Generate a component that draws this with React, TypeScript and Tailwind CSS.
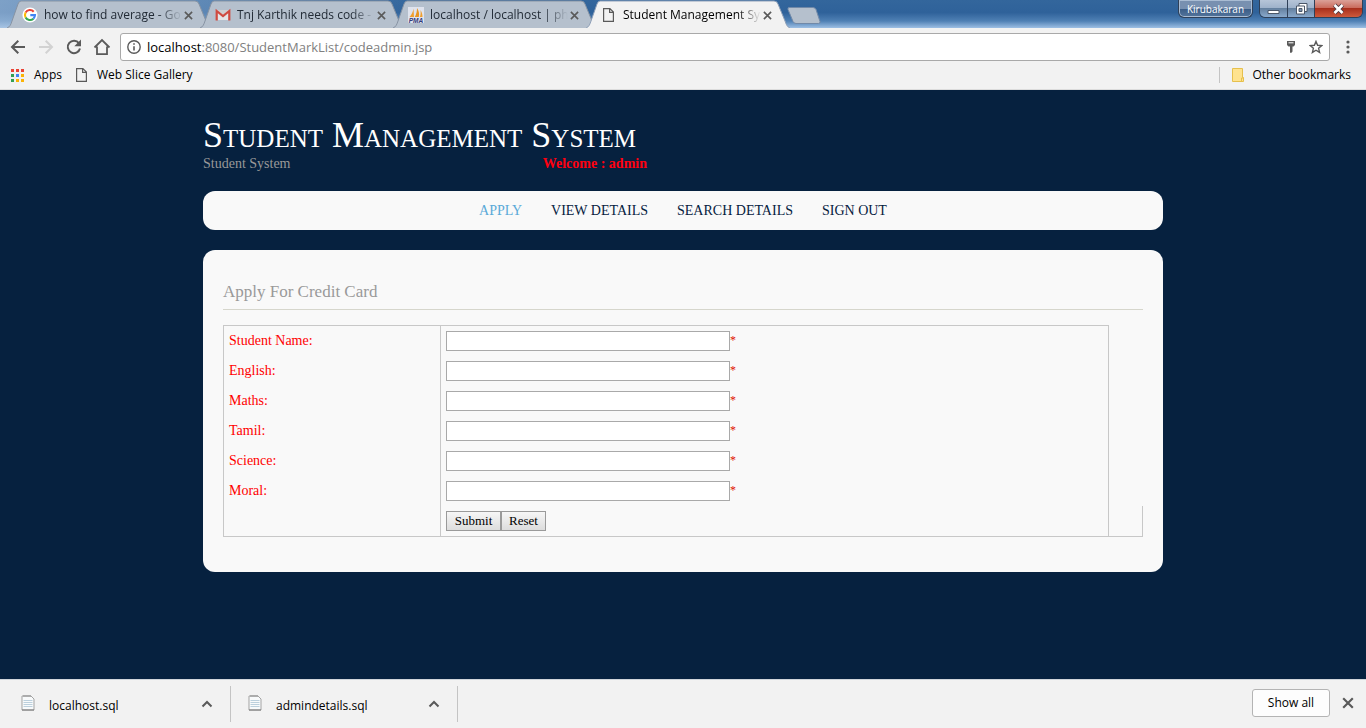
import type { ReactNode } from "react";

function CloseGlyph({ size = 10, width = 2 }: { size?: number; width?: number }) {
  return (
    <svg width={size} height={size} viewBox="0 0 10 10" fill="none" stroke="#5a5a5a" strokeWidth={width} aria-hidden="true">
      <path d="M1 1l8 8M9 1L1 9" />
    </svg>
  );
}

function GoogleIcon() {
  return (
    <svg className="shrink-0" width="16" height="16" viewBox="0 0 16 16" aria-hidden="true">
      <circle cx="8" cy="8" r="7.6" fill="#fff" />
      <g fill="none" strokeWidth="2.1">
        <path d="M11.7 4.7A5 5 0 0 0 3.6 5.6" stroke="#ea4335" />
        <path d="M3.6 5.6a5 5 0 0 0 0 4.8" stroke="#fbbc05" />
        <path d="M3.6 10.4a5 5 0 0 0 7.8 1.3" stroke="#34a853" />
        <path d="M11.4 11.7A5 5 0 0 0 13 8.1H8.3" stroke="#4285f4" />
      </g>
    </svg>
  );
}

function GmailIcon() {
  return (
    <svg className="shrink-0" width="16" height="16" viewBox="0 0 16 16" aria-hidden="true">
      <path d="M2 3h12v10H2z" fill="#e4e4e6" />
      <path d="M2 3l6 5 6-5z" fill="#cfcfd2" />
      <path d="M1.7 13.5V4L8 9l6.3-5v9.5" fill="none" stroke="#cf4a40" strokeWidth="2.2" />
    </svg>
  );
}

function PmaIcon() {
  return (
    <svg className="shrink-0" width="16" height="16" viewBox="0 0 16 16" aria-hidden="true">
      <path d="M0 0h16v16H0z" fill="#dfe3ee" />
      <path d="M5.5 1.5L6 10H1.5C3.5 8 5 5 5.500 1.500z" fill="#f0a030" />
      <path d="M9 1c2 3 2.500 6 1.800 9H6.800C8.500 7 9 4 9 1z" fill="#e99520" />
      <path d="M12.500 3c1.500 2.500 2 4.500 2 7h-2.700c.9-2 1-4.500.7-7z" fill="#f0a030" />
      <text x="8" y="15.500" textAnchor="middle" fontFamily="Liberation Sans, sans-serif" fontSize="6.500" fontWeight="bold" fontStyle="italic" fill="#333a78">
        PMA
      </text>
    </svg>
  );
}

function PageIcon() {
  return (
    <svg className="shrink-0" width="16" height="16" viewBox="0 0 16 16" fill="none" stroke="#5a5a5a" strokeWidth="1.2" aria-hidden="true">
      <path d="M2.600 1.600h6.300l3.500 3.500v9.300H2.600zM8.600 1.600v3.800h3.800" />
    </svg>
  );
}

function Tab({ icon, title, active }: { icon: ReactNode; title: string; active?: boolean }) {
  return (
    <div className={`relative -mr-[11px] h-7 w-[204px] shrink-0 ${active ? "z-10" : ""}`}>
      <svg className="absolute inset-0 h-full w-full" viewBox="0 0 204 28" preserveAspectRatio="none" aria-hidden="true">
        <path
          d="M0 28C3 27 4 24 5 21L11 4Q12 1 14 1H188Q191 1 192 4L199 21C200 24 201 27 204 28"
          fill={active ? "#f2f2f2" : "#b5c0cd"}
          stroke={active ? "#8fa0b8" : "#8793a3"}
          strokeWidth="1"
        />
      </svg>
      <div className="relative flex h-full items-center pt-0.5 pl-[15px] pr-[18px]">
        {icon}
        <a
          href="#"
          className={`ml-1.5 min-w-0 flex-1 whitespace-nowrap text-[12px] leading-4 [mask-image:linear-gradient(to_right,black_114px,transparent_138px)] ${active ? "text-black" : "text-[#222b36]"}`}
        >
          {title}
        </a>
        <button type="button" aria-label={`Close ${title}`}>
          <CloseGlyph size={9} width={1.8} />
        </button>
      </div>
    </div>
  );
}

function TitleBar() {
  return (
    <div className="flex h-7 bg-[linear-gradient(to_right,rgba(175,200,228,0.6)_0,rgba(175,200,228,0.35)_210px,transparent_420px),linear-gradient(to_bottom,#33669c_0,#2f629a_45%,#4f80b4_75%,#9dbfe4_100%)] pl-[7px]">
      <Tab icon={<GoogleIcon />} title="how to find average - Go" />
      <Tab icon={<GmailIcon />} title="Tnj Karthik needs code -" />
      <Tab icon={<PmaIcon />} title="localhost / localhost | ph" />
      <Tab icon={<PageIcon />} title="Student Management Sy" active />
      <button type="button" aria-label="New tab" className="ml-2 mt-[7px] h-[17px]">
        <svg width="34" height="17" viewBox="0 0 34 17" aria-hidden="true">
          <path d="M2 .5h24q2 0 3 2l4 12q.5 2-1.500 2H9q-2 0-3-2L1 2.500Q.5.5 2 .5z" fill="#b5c0cd" stroke="#7189a8" />
        </svg>
      </button>
      <div className="ml-auto flex h-[18px] items-start gap-1.5 pr-[3px]">
        <button
          type="button"
          className="h-[18px] w-[75px] rounded-b-md border border-t-0 border-[#2f4058] bg-[linear-gradient(to_bottom,#7890b0_0,#7890b0_50%,#3a5c86_52%,#54759c_100%)] text-[10px] leading-4 text-white shadow-[inset_0_0_0_1px_#a9bcd3]"
        >
          Kirubakaran
        </button>
        <div className="flex h-[18px] overflow-hidden rounded-b-md border border-t-0 border-[#2f4058]">
          <button type="button" aria-label="Minimize" className="flex w-[28px] items-center justify-center border-r border-[#2f4058] bg-[linear-gradient(to_bottom,#b6c5d8_0,#9db1ca_48%,#64809f_50%,#8aa9cc_100%)]">
            <svg width="13" height="12" viewBox="0 0 13 12" aria-hidden="true">
              <path d="M1 7.500h11v3H1z" fill="#fff" stroke="#4b5768" />
            </svg>
          </button>
          <button type="button" aria-label="Restore" className="flex w-[27px] items-center justify-center border-r border-[#2f4058] bg-[linear-gradient(to_bottom,#b6c5d8_0,#9db1ca_48%,#64809f_50%,#8aa9cc_100%)]">
            <svg width="13" height="13" viewBox="0 0 13 13" fill="#fff" stroke="#4b5768" aria-hidden="true">
              <path d="M4 1.500h8v8H4z" />
              <path d="M1.500 4h8v8h-8z" />
              <path d="M4 6.500h3v3H4z" fill="#7f95b0" />
            </svg>
          </button>
          <button type="button" aria-label="Close window" className="flex w-[47px] items-center justify-center bg-[linear-gradient(to_bottom,#dba198_0,#c9695a_48%,#a8301d_50%,#cf5a3b_100%)]">
            <svg width="13" height="12" viewBox="0 0 13 12" fill="none" aria-hidden="true">
              <path d="M2.500 2l8 8M10.500 2l-8 8" stroke="#4a3840" strokeWidth="4.400" />
              <path d="M2.500 2l8 8M10.500 2l-8 8" stroke="#fff" strokeWidth="2.600" />
            </svg>
          </button>
        </div>
      </div>
    </div>
  );
}

function Toolbar() {
  return (
    <div className="flex h-[38px] items-center bg-[#f2f2f2] pl-[9px] pr-2.5">
      <div className="flex items-center gap-2.5">
        <button type="button" aria-label="Back">
          <svg width="18" height="18" viewBox="0 0 18 18" fill="none" stroke="#5a5a5a" strokeWidth="2" aria-hidden="true">
            <path d="M16 9H3M9.300 2.700L3 9l6.300 6.300" />
          </svg>
        </button>
        <button type="button" aria-label="Forward">
          <svg width="18" height="18" viewBox="0 0 18 18" fill="none" stroke="#d2d2d2" strokeWidth="2" aria-hidden="true">
            <path d="M2 9h13M8.700 2.700L15 9l-6.300 6.300" />
          </svg>
        </button>
        <button type="button" aria-label="Reload">
          <svg width="18" height="18" viewBox="0 0 18 18" aria-hidden="true">
            <path d="M14 5.300A6.200 6.200 0 1 0 15 10.500" fill="none" stroke="#5a5a5a" strokeWidth="2" />
            <path d="M16 1.500v6.700H9.300z" fill="#5a5a5a" />
          </svg>
        </button>
        <button type="button" aria-label="Home">
          <svg width="18" height="18" viewBox="0 0 18 18" fill="none" stroke="#5a5a5a" strokeWidth="1.800" aria-hidden="true">
            <path d="M1.500 9.500L9 2l7.500 7.500M4 8.500v7.600h10V8.500" />
          </svg>
        </button>
      </div>
      <div className="ml-[9px] flex h-7 min-w-0 flex-1 items-center rounded-[3px] border border-[#a9a9a9] bg-white pl-1.5 pr-1.5">
        <svg width="14" height="14" viewBox="0 0 14 14" fill="none" stroke="#5a5a5a" strokeWidth="1.400" aria-hidden="true">
          <circle cx="7" cy="7" r="6.200" />
          <path d="M7 6.200v4.300M7 3.300v1.500" strokeWidth="1.600" />
        </svg>
        <div className="ml-1.5 flex-1 truncate text-[13px] leading-5 text-[#808080]">
          <span className="text-black">localhost</span>:8080/StudentMarkList/codeadmin.jsp
        </div>
        <button type="button" aria-label="Saved passwords" className="mr-3">
          <svg width="12" height="14" viewBox="0 0 12 14" aria-hidden="true">
            <path d="M2 1h8v4L8.500 6.500H7.500V11.500L6.500 12.800H5V6.500H3.500L2 5z" fill="#5a5a5a" />
            <path d="M3.500 2.800h5" stroke="#fff" />
          </svg>
        </button>
        <button type="button" aria-label="Bookmark this page">
          <svg width="14" height="14" viewBox="0 0 14 14" fill="none" stroke="#5a5a5a" strokeWidth="1.400" aria-hidden="true">
            <path d="M7 1.400l1.600 3.900 4.200.3-3.200 2.700 1 4.100L7 10.200l-3.600 2.200 1-4.100L1.200 5.600l4.200-.3z" />
          </svg>
        </button>
      </div>
      <button type="button" aria-label="Menu" className="ml-4 mr-1.5">
        <svg width="4" height="14" viewBox="0 0 4 14" fill="#5a5a5a" aria-hidden="true">
          <circle cx="2" cy="2" r="1.600" />
          <circle cx="2" cy="7" r="1.600" />
          <circle cx="2" cy="12" r="1.600" />
        </svg>
      </button>
    </div>
  );
}

const appDots = ["#ea4335", "#ea4335", "#ea4335", "#34a053", "#4285f4", "#fbb305", "#34a053", "#fbb305", "#fbb305"];

function BookmarksBar() {
  return (
    <div className="flex h-6 items-start border-b border-[#dcdcdc] bg-[#f2f2f2] pt-px pr-[15px] pl-[11px] text-[12px] leading-4 text-black">
      <a href="#" className="flex items-center gap-2.5">
        <svg width="13" height="13" viewBox="0 0 13 13" aria-hidden="true">
          {appDots.map((color, i) => (
            <rect key={i} x={(i % 3) * 5} y={Math.floor(i / 3) * 5} width="3" height="3" fill={color} />
          ))}
        </svg>
        Apps
      </a>
      <a href="#" className="ml-3 flex items-center gap-[7px]">
        <PageIcon />
        Web Slice Gallery
      </a>
      <a href="#" className="ml-auto flex items-center gap-2 border-l border-[#c4c4c4] pl-3">
        <svg width="12" height="14" viewBox="0 0 12 14" fill="#ffe38f" stroke="#e6c04d" aria-hidden="true">
          <path d="M.5.5h10v9h1v4H.5z" />
          <path d="M9.500 13.500v-3.500h2" fill="none" />
        </svg>
        Other bookmarks
      </a>
    </div>
  );
}

const navLinks = ["APPLY", "VIEW DETAILS", "SEARCH DETAILS", "SIGN OUT"];
const fields = ["Student Name", "English", "Maths", "Tamil", "Science", "Moral"];

function MarkForm() {
  return (
    <form onSubmit={(event) => event.preventDefault()}>
      <table className="w-full table-fixed border-separate border-spacing-0 text-[14px] leading-5">
        <colgroup>
          <col className="w-[218px]" />
          <col />
          <col className="w-[34px]" />
        </colgroup>
        <tbody>
          {fields.map((field, i) => (
            <tr key={field}>
              <td className={`border-x border-[#c8c8c8] p-[5px] align-top text-[#ff0000] ${i === 0 ? "border-t" : ""}`}>
                <label htmlFor={field}>{field}:</label>
              </td>
              <td className={`border-r border-[#c8c8c8] p-[5px] ${i === 0 ? "border-t" : ""}`}>
                <div className="flex h-5">
                  <input id={field} type="text" className="h-5 w-[284px] border border-[#a9a9a9] bg-white px-0.5 text-black" />
                  <span className="text-[12px] leading-[18px] text-[#e01000]">*</span>
                </div>
              </td>
            </tr>
          ))}
          <tr>
            <td className="border-x border-b border-[#c8c8c8]" />
            <td className="border-r border-b border-[#c8c8c8] p-[5px]">
              <div className="flex h-5 text-[13px] leading-[18px] text-black">
                <button type="submit" className="h-5 w-[55px] border border-[#9a9a9a] bg-linear-to-b from-[#f6f6f6] to-[#dddddd]">
                  Submit
                </button>
                <button type="reset" className="h-5 w-[45px] border border-[#9a9a9a] bg-linear-to-b from-[#f6f6f6] to-[#dddddd]">
                  Reset
                </button>
              </div>
            </td>
            <td className="border-r border-b border-[#c8c8c8]" />
          </tr>
        </tbody>
      </table>
    </form>
  );
}

function SitePage() {
  return (
    <main className="flex-1 bg-[#06213f] px-4 font-['Liberation_Serif',serif]">
      <div className="mx-auto w-full max-w-[960px] pb-12">
        <header className="pt-[26px] pb-[17px]">
          <h1 className="text-[36px] leading-[38px] text-white [font-variant:small-caps]">Student Management System</h1>
          <div className="flex max-w-[444px] justify-between text-[14px] leading-5">
            <p className="text-[#999999]">Student System</p>
            <p className="font-bold text-[#ff0010]">Welcome : admin</p>
          </div>
        </header>
        <nav className="flex h-[39px] items-center justify-center gap-[29px] rounded-xl bg-[#f9f9f9] text-[14px] leading-5">
          {navLinks.map((link, i) => (
            <a key={link} href="#" className={i === 0 ? "text-[#59a9d8]" : "text-[#06213f]"}>
              {link}
            </a>
          ))}
        </nav>
        <section className="mt-5 rounded-xl bg-[#f9f9f9] px-5 pt-[30px] pb-[35px]">
          <h2 className="mb-[15px] border-b border-[#d6d6cc] pb-[5px] text-[17px] leading-6 text-[#999999]">Apply For Credit Card</h2>
          <MarkForm />
        </section>
      </div>
    </main>
  );
}

function DownloadItem({ name }: { name: string }) {
  return (
    <div className="flex h-9 items-center border-r border-[#c4c4c4] pl-[21px] pr-[17px] first:w-[231px] nth-2:w-[227px] nth-2:pl-[17px]">
      <svg width="14" height="20" viewBox="0 0 14 20" aria-hidden="true">
        <path d="M1 2h9l3 3v11H1z" fill="#f8fafb" stroke="#a3a3a3" />
        <path d="M3 1v2M5 1v2M7 1v2M9 1v2" stroke="#8c8c8c" />
        <path d="M2.500 6.500h9M2.500 8.500h9M2.500 10.500h9M2.500 12.500h9" stroke="#bcd0dd" />
        <path d="M1 16h12" stroke="#777" />
      </svg>
      <a href="#" className="ml-3.5 flex-1 pt-1 text-[12px] leading-5 text-black">
        {name}
      </a>
      <button type="button" aria-label={`Options for ${name}`}>
        <svg width="12" height="8" viewBox="0 0 12 8" fill="none" stroke="#5a5a5a" strokeWidth="2" aria-hidden="true">
          <path d="M1.500 6.500L6 2l4.500 4.500" />
        </svg>
      </button>
    </div>
  );
}

function DownloadShelf() {
  return (
    <footer className="flex h-[49px] items-center border-t border-[#d0d5da] bg-[#f2f2f2]">
      <div className="flex flex-1">
        <DownloadItem name="localhost.sql" />
        <DownloadItem name="admindetails.sql" />
      </div>
      <button type="button" className="mb-0.5 h-7 w-[78px] rounded-[3px] border border-[#b4b4b4] bg-[#fdfdfd] text-[12px] leading-4 text-black">
        Show all
      </button>
      <button type="button" aria-label="Close downloads bar" className="mr-3 mb-0.5 ml-3">
        <CloseGlyph size={12} width={1.8} />
      </button>
    </footer>
  );
}

export default function App() {
  return (
    <div className="flex min-h-screen flex-col font-['Open_Sans',sans-serif]">
      <TitleBar />
      <Toolbar />
      <BookmarksBar />
      <SitePage />
      <DownloadShelf />
    </div>
  );
}
